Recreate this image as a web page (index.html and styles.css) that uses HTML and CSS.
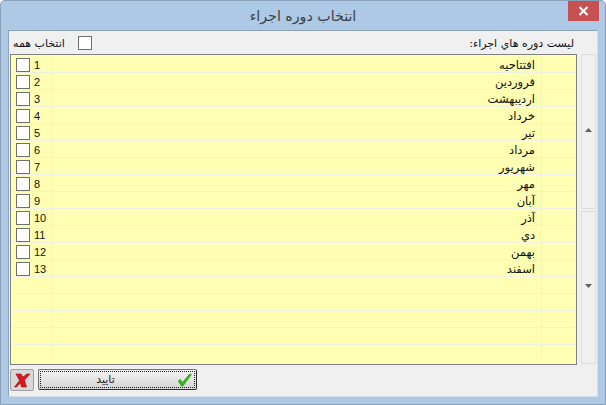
FILE: index.html
```html
<!DOCTYPE html>
<html lang="fa">
<head>
<meta charset="utf-8">
<title>انتخاب دوره اجراء</title>
<link rel="stylesheet" href="styles.css">
</head>
<body>
<div class="window">
  <div class="titlebar">
    <span class="title" dir="rtl">انتخاب دوره اجراء</span>
    <div class="close"><svg width="11" height="10" viewBox="0 0 11 10"><path d="M1.5 1 L9.5 9 M9.5 1 L1.5 9" stroke="#fff" stroke-width="2" fill="none"/></svg></div>
  </div>
  <div class="client">
    <div class="toolbar">
      <div class="select-all">
        <span class="label" dir="rtl">انتخاب همه</span>
        <span class="check"></span>
      </div>
      <span class="label" dir="rtl">ليست دوره هاي اجراء:</span>
    </div>
    <div class="main">
      <div class="grid">
        <div class="row"><div class="c-check"><span class="check"></span></div><div class="c-num">1</div><div class="c-name" dir="rtl">افتتاحيه</div><div class="c-end"></div></div>
        <div class="row"><div class="c-check"><span class="check"></span></div><div class="c-num">2</div><div class="c-name" dir="rtl">فروردين</div><div class="c-end"></div></div>
        <div class="row"><div class="c-check"><span class="check"></span></div><div class="c-num">3</div><div class="c-name" dir="rtl">ارديبهشت</div><div class="c-end"></div></div>
        <div class="row"><div class="c-check"><span class="check"></span></div><div class="c-num">4</div><div class="c-name" dir="rtl">خرداد</div><div class="c-end"></div></div>
        <div class="row"><div class="c-check"><span class="check"></span></div><div class="c-num">5</div><div class="c-name" dir="rtl">تير</div><div class="c-end"></div></div>
        <div class="row"><div class="c-check"><span class="check"></span></div><div class="c-num">6</div><div class="c-name" dir="rtl">مرداد</div><div class="c-end"></div></div>
        <div class="row"><div class="c-check"><span class="check"></span></div><div class="c-num">7</div><div class="c-name" dir="rtl">شهريور</div><div class="c-end"></div></div>
        <div class="row"><div class="c-check"><span class="check"></span></div><div class="c-num">8</div><div class="c-name" dir="rtl">مهر</div><div class="c-end"></div></div>
        <div class="row"><div class="c-check"><span class="check"></span></div><div class="c-num">9</div><div class="c-name" dir="rtl">آبان</div><div class="c-end"></div></div>
        <div class="row"><div class="c-check"><span class="check"></span></div><div class="c-num">10</div><div class="c-name" dir="rtl">آذر</div><div class="c-end"></div></div>
        <div class="row"><div class="c-check"><span class="check"></span></div><div class="c-num">11</div><div class="c-name" dir="rtl">دي</div><div class="c-end"></div></div>
        <div class="row"><div class="c-check"><span class="check"></span></div><div class="c-num">12</div><div class="c-name" dir="rtl">بهمن</div><div class="c-end"></div></div>
        <div class="row"><div class="c-check"><span class="check"></span></div><div class="c-num">13</div><div class="c-name" dir="rtl">اسفند</div><div class="c-end"></div></div>
        <div class="row"><div class="c-check"></div><div class="c-num"></div><div class="c-name"></div><div class="c-end"></div></div>
        <div class="row"><div class="c-check"></div><div class="c-num"></div><div class="c-name"></div><div class="c-end"></div></div>
        <div class="row"><div class="c-check"></div><div class="c-num"></div><div class="c-name"></div><div class="c-end"></div></div>
        <div class="row"><div class="c-check"></div><div class="c-num"></div><div class="c-name"></div><div class="c-end"></div></div>
        <div class="row last"><div class="c-check"></div><div class="c-num"></div><div class="c-name"></div><div class="c-end"></div></div>
      </div>
      <div class="scrollbar">
        <div class="track"><svg width="7" height="4" viewBox="0 0 7 4"><path d="M3.5 0 L7 4 L0 4 Z" fill="#606060"/></svg></div>
        <div class="track bottom"><svg width="7" height="4" viewBox="0 0 7 4"><path d="M0 0 L7 0 L3.5 4 Z" fill="#606060"/></svg></div>
      </div>
    </div>
    <div class="actions">
      <button class="btn-cancel" type="button"><svg width="17" height="15" viewBox="0 0 17 15"><path d="M2 1 L7 1 L9 4 L13 1 L16 1 L10.5 7 L12.5 14 L7.5 14 L6.5 10 L2.5 14 L0.5 14 L5.5 7.5 Z" fill="#e0161c" stroke="#8c1014" stroke-width=".6"/></svg></button>
      <button class="btn-ok" type="button">
        <span class="focus">
          <span class="ok-text" dir="rtl">تاييد</span>
          <svg class="ok-icon" width="15" height="14" viewBox="0 0 15 14"><path d="M1 8 L3.5 6.5 L5.5 9.5 L12.5 1 L14.5 1.5 L6 13 L4.5 13 Z" fill="#35b81e" stroke="#1d8a10" stroke-width=".5"/></svg>
        </span>
      </button>
    </div>
  </div>
</div>
</body>
</html>
```

FILE: styles.css
```css
* { box-sizing: border-box; }
html, body { margin: 0; padding: 0; }
body { width: 606px; height: 405px; overflow: hidden; font-family: "DejaVu Sans", sans-serif; }
.window {
  width: 606px; height: 405px;
  background: #adc9e6;
  border: 1px solid #8aa0b8;
  border-radius: 5px 5px 0 0;
  padding: 0 7px 7px;
  display: flex; flex-direction: column;
}
.titlebar { height: 29px; flex: none; display: flex; align-items: center; justify-content: center; position: relative; }
.title { font-size: 14.2px; color: #3a3f45; }
.close {
  position: absolute; top: 0; right: -1px; width: 31px; height: 20px;
  background: #c75050; display: flex; align-items: center; justify-content: center;
}
.client {
  flex: 1; background: #f0f0f0;
  border: 1px solid #8fa3b8;
  border-color: #8fa3b8 #d4dde6 #d4dde6 #8fa3b8;
  display: flex; flex-direction: column;
  padding: 0 1px;
}
.toolbar { height: 23px; flex: none; display: flex; justify-content: space-between; align-items: center; padding: 1px 22px 0 3px; }
.select-all { display: flex; align-items: center; gap: 13px; }
.label { font-size: 11px; color: #111; }
.check { display: block; width: 14px; height: 14px; background: #fff; border: 1px solid #707070; }
.main { display: flex; gap: 4px; height: 311px; flex: none; }
.grid {
  width: 567px; height: 311px; flex: none;
  background: #ffffb4;
  border: 1px solid #808080;
  padding-top: 1px;
  display: flex; flex-direction: column;
}
.row { height: 17px; flex: none; display: grid; grid-template-columns: 19px 22px 1fr 34px; border-bottom: 1px solid #f0f0e6; }
.row.last { border-bottom: none; }
.c-check { padding: 2px 0 0 5px; display: flex; }
.c-num { font-family: "Liberation Sans", sans-serif; font-size: 11px; line-height: 18px; color: #111; padding-left: 4px; border-right: 1px solid #f0f0e6; }
.c-name { font-size: 11.5px; line-height: 18px; color: #111; text-align: right; border-right: 1px solid #f0f0e6; }
.c-name[dir="rtl"] { padding-right: 6px; }
.scrollbar { width: 15px; flex: none; display: flex; flex-direction: column; gap: 2px; height: 310px; }
.track { flex: 1; background: #f0f0f0; border: 1px solid #dcdcdc; display: flex; justify-content: center; padding-top: 73px; }
.track.bottom { padding-top: 72px; }
.actions { flex: 1; display: flex; align-items: flex-start; padding-top: 4px; gap: 4px; }
.btn-cancel {
  width: 24px; height: 22px; padding: 0;
  background: #d8d8d8; border: 1px solid #a0a0a0; border-radius: 2px;
  display: flex; align-items: center; justify-content: center;
}
.btn-ok {
  width: 159px; height: 21px; padding: 1px;
  background: linear-gradient(#f4f4f4, #d4d4d4);
  border: 1px solid #707070; border-right-color: #303030; border-bottom-color: #303030; border-radius: 2px;
  display: flex;
}
.focus { flex: 1; border: 1px dotted #222; display: flex; align-items: center; position: relative; justify-content: center; padding-right: 24px; }
.ok-text { font-family: "DejaVu Sans", sans-serif; font-size: 11px; color: #222; }
.ok-icon { position: absolute; right: 2px; top: 1px; }
```
